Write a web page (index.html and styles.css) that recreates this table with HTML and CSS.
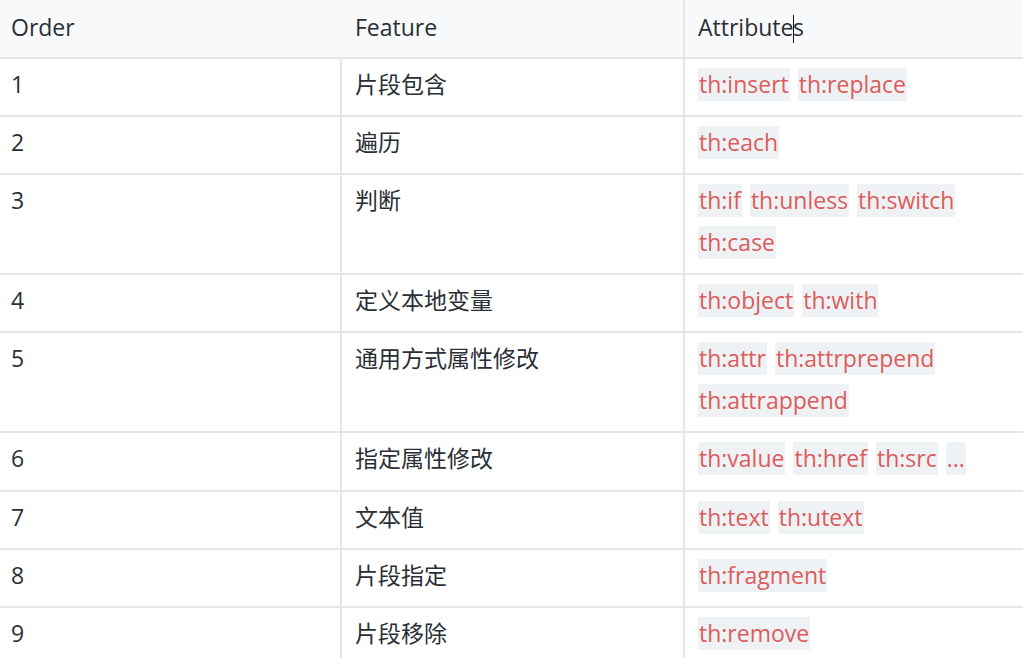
FILE: index.html
```html
<!DOCTYPE html>
<html>
<head>
<meta charset="utf-8">
<link rel="stylesheet" href="styles.css">
</head>
<body>
<table class="grid">
  <thead>
    <tr>
      <th class="c-order">Order</th>
      <th class="c-feature">Feature</th>
      <th class="c-attr">Attribute<span class="caret"></span>s</th>
    </tr>
  </thead>
  <tbody>
    <tr>
      <td class="c-order">1</td>
      <td class="c-feature">片段包含</td>
      <td class="c-attr"><div class="tags"><code>th:insert</code><code>th:replace</code></div></td>
    </tr>
    <tr>
      <td class="c-order">2</td>
      <td class="c-feature">遍历</td>
      <td class="c-attr"><div class="tags"><code>th:each</code></div></td>
    </tr>
    <tr>
      <td class="c-order">3</td>
      <td class="c-feature">判断</td>
      <td class="c-attr"><div class="tags"><code>th:if</code><code>th:unless</code><code>th:switch</code><code>th:case</code></div></td>
    </tr>
    <tr>
      <td class="c-order">4</td>
      <td class="c-feature">定义本地变量</td>
      <td class="c-attr"><div class="tags"><code>th:object</code><code>th:with</code></div></td>
    </tr>
    <tr>
      <td class="c-order">5</td>
      <td class="c-feature">通用方式属性修改</td>
      <td class="c-attr"><div class="tags"><code>th:attr</code><code>th:attrprepend</code><code>th:attrappend</code></div></td>
    </tr>
    <tr class="tall">
      <td class="c-order">6</td>
      <td class="c-feature">指定属性修改</td>
      <td class="c-attr"><div class="tags"><code>th:value</code><code>th:href</code><code>th:src</code><code>...</code></div></td>
    </tr>
    <tr>
      <td class="c-order">7</td>
      <td class="c-feature">文本值</td>
      <td class="c-attr"><div class="tags"><code>th:text</code><code>th:utext</code></div></td>
    </tr>
    <tr>
      <td class="c-order">8</td>
      <td class="c-feature">片段指定</td>
      <td class="c-attr"><div class="tags"><code>th:fragment</code></div></td>
    </tr>
    <tr>
      <td class="c-order">9</td>
      <td class="c-feature">片段移除</td>
      <td class="c-attr"><div class="tags"><code>th:remove</code></div></td>
    </tr>
  </tbody>
</table>
</body>
</html>
```

FILE: styles.css
```css
html, body {
  margin: 0;
  padding: 0;
  overflow: hidden;
  background: #ffffff;
}

body {
  font-family: "Open Sans", "Noto Sans CJK SC", sans-serif;
  font-size: 23px;
  color: #2b2f35;
}

.grid {
  border-collapse: separate;
  border-spacing: 0;
  table-layout: fixed;
  width: 1026px;
}

.grid th,
.grid td {
  box-sizing: border-box;
  text-align: left;
  vertical-align: top;
  line-height: 33px;
  font-weight: 400;
  border-bottom: 2px solid #e6e6e6;
}

.grid th {
  background: #f8f9fb;
  height: 59px;
  padding: 11px 13px 13px 13px;
}

.grid td {
  padding: 9px 13px 14px 13px;
}

.grid tr.tall td {
  padding-bottom: 15px;
}

.c-order {
  width: 340px;
  padding-left: 11px !important;
}

.c-feature {
  width: 343px;
  border-left: 2px solid #e6e6e6;
}

th.c-feature {
  border-left-color: #f8f9fb;
}

.c-attr {
  width: 343px;
  border-left: 2px solid #e6e6e6;
}

.tags {
  display: flex;
  flex-wrap: wrap;
  gap: 9px 8px;
}

.tags code {
  font-family: "Open Sans", sans-serif;
  font-size: 23px;
  line-height: 33px;
  height: 33px;
  padding: 0 1px;
  background: #eff2f5;
  color: #dc5c5c;
}

.caret {
  display: inline-block;
  width: 0;
  height: 28px;
  border-left: 1.5px solid #111;
  vertical-align: -7px;
  margin: 0 -0.75px;
}
```
